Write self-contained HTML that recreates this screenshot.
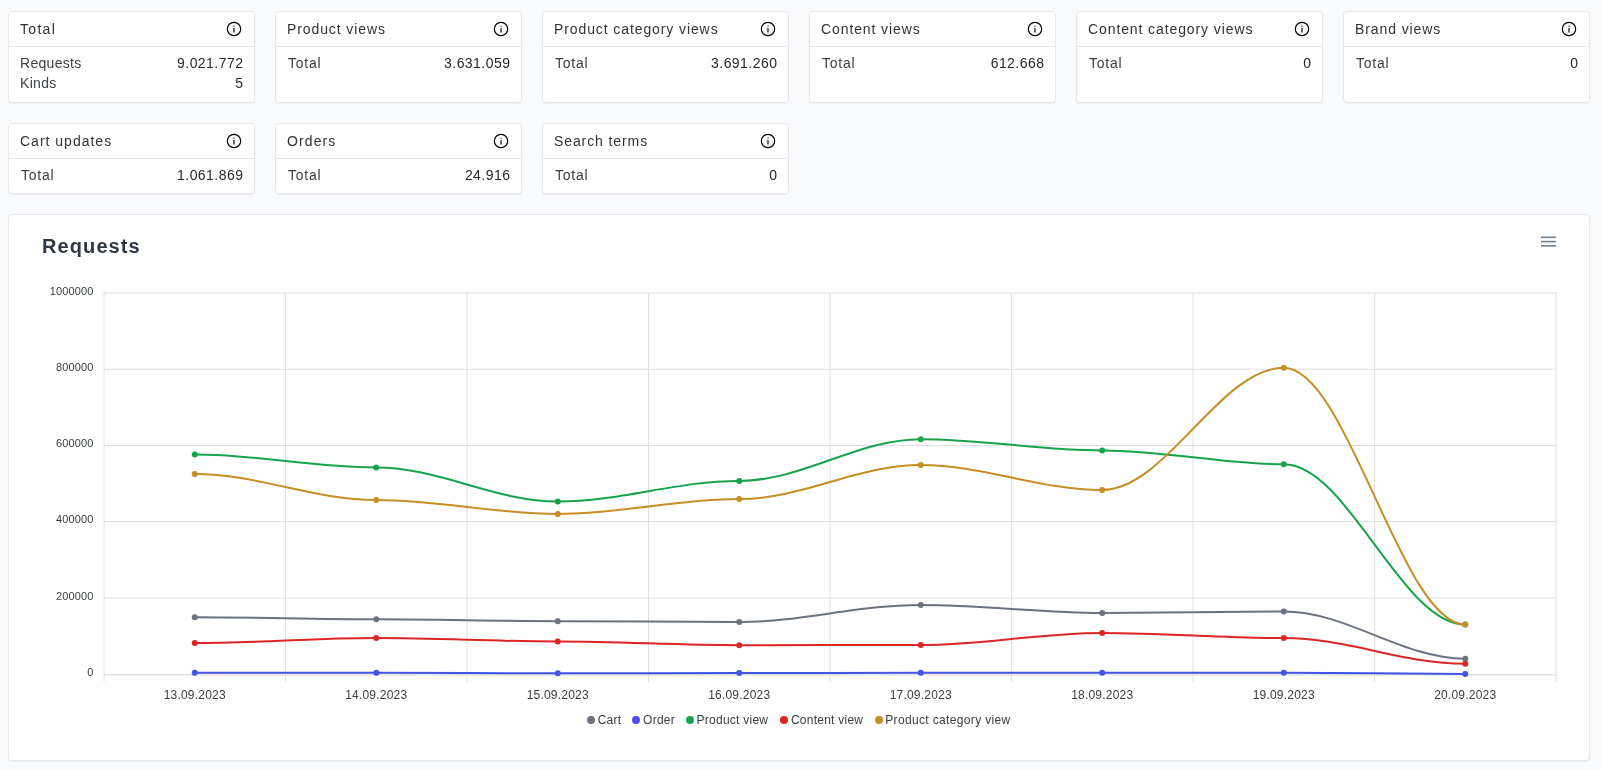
<!DOCTYPE html>
<html><head><meta charset="utf-8"><style>
*{box-sizing:border-box}
html,body{margin:0;padding:0}
body{will-change:transform;width:1601px;height:769px;background:#f9fafb;position:relative;overflow:hidden;font-family:"Liberation Sans",sans-serif;}
.card{position:absolute;width:247px;background:#fff;border:1px solid #e5e7eb;border-radius:4px;box-shadow:0 1px 2px rgba(0,0,0,.05)}
.hd{height:35px;border-bottom:1px solid #e5e7eb;position:relative}
.ht{position:absolute;left:11px;top:7px;font-size:14px;line-height:20px;color:#333;letter-spacing:.9px}
.info{position:absolute;left:217px;top:9px}
.bd{padding-top:6px}
.row{height:20px;position:relative;font-size:14px;line-height:20px}
.lb{position:absolute;left:11px;top:0;color:#3a3f44;letter-spacing:.3px}
.vl{position:absolute;right:10.6px;top:0;color:#25292d;letter-spacing:.45px}
.tt{left:12px;letter-spacing:.75px}
.chart{position:absolute;left:8px;top:214px;width:1582px;height:547px;background:#fff;border:1px solid #e5e7eb;border-radius:4px;box-shadow:0 1px 2px rgba(0,0,0,.05)}
.title{position:absolute;left:33px;top:17px;font-size:20px;font-weight:bold;color:#2f3646;line-height:28px;letter-spacing:1.1px}
svg.plot{position:absolute;left:0;top:0}
.yl,.xl{font-family:"Liberation Sans",sans-serif;font-size:11px;fill:#373d3f}
.yl{letter-spacing:.15px}
.xl{font-size:12px;letter-spacing:.2px}
.lt{position:absolute;top:712px;font-size:12px;line-height:16px;color:#373d3f;white-space:nowrap;letter-spacing:.25px}
.mk{position:absolute;top:716px;width:8px;height:8px;border-radius:50%}
</style></head><body>
<div class="card" style="left:8px;top:11px;height:92px"><div class="hd"><span class="ht" style="letter-spacing:1.3px">Total</span><svg class="info" width="16" height="16" viewBox="0 0 24 24" fill="none" stroke="#000" stroke-width="1.75" stroke-linecap="round" stroke-linejoin="round"><circle cx="12" cy="12" r="10"/><line x1="12" y1="16.6" x2="12" y2="11.4"/><line x1="12" y1="7.8" x2="12.01" y2="7.8"/></svg></div><div class="bd"><div class="row"><span class="lb">Requests</span><span class="vl">9.021.772</span></div><div class="row"><span class="lb">Kinds</span><span class="vl">5</span></div></div></div>
<div class="card" style="left:275px;top:11px;height:92px"><div class="hd"><span class="ht">Product views</span><svg class="info" width="16" height="16" viewBox="0 0 24 24" fill="none" stroke="#000" stroke-width="1.75" stroke-linecap="round" stroke-linejoin="round"><circle cx="12" cy="12" r="10"/><line x1="12" y1="16.6" x2="12" y2="11.4"/><line x1="12" y1="7.8" x2="12.01" y2="7.8"/></svg></div><div class="bd"><div class="row"><span class="lb tt">Total</span><span class="vl">3.631.059</span></div></div></div>
<div class="card" style="left:542px;top:11px;height:92px"><div class="hd"><span class="ht">Product category views</span><svg class="info" width="16" height="16" viewBox="0 0 24 24" fill="none" stroke="#000" stroke-width="1.75" stroke-linecap="round" stroke-linejoin="round"><circle cx="12" cy="12" r="10"/><line x1="12" y1="16.6" x2="12" y2="11.4"/><line x1="12" y1="7.8" x2="12.01" y2="7.8"/></svg></div><div class="bd"><div class="row"><span class="lb tt">Total</span><span class="vl">3.691.260</span></div></div></div>
<div class="card" style="left:809px;top:11px;height:92px"><div class="hd"><span class="ht">Content views</span><svg class="info" width="16" height="16" viewBox="0 0 24 24" fill="none" stroke="#000" stroke-width="1.75" stroke-linecap="round" stroke-linejoin="round"><circle cx="12" cy="12" r="10"/><line x1="12" y1="16.6" x2="12" y2="11.4"/><line x1="12" y1="7.8" x2="12.01" y2="7.8"/></svg></div><div class="bd"><div class="row"><span class="lb tt">Total</span><span class="vl">612.668</span></div></div></div>
<div class="card" style="left:1076px;top:11px;height:92px"><div class="hd"><span class="ht">Content category views</span><svg class="info" width="16" height="16" viewBox="0 0 24 24" fill="none" stroke="#000" stroke-width="1.75" stroke-linecap="round" stroke-linejoin="round"><circle cx="12" cy="12" r="10"/><line x1="12" y1="16.6" x2="12" y2="11.4"/><line x1="12" y1="7.8" x2="12.01" y2="7.8"/></svg></div><div class="bd"><div class="row"><span class="lb tt">Total</span><span class="vl">0</span></div></div></div>
<div class="card" style="left:1343px;top:11px;height:92px"><div class="hd"><span class="ht">Brand views</span><svg class="info" width="16" height="16" viewBox="0 0 24 24" fill="none" stroke="#000" stroke-width="1.75" stroke-linecap="round" stroke-linejoin="round"><circle cx="12" cy="12" r="10"/><line x1="12" y1="16.6" x2="12" y2="11.4"/><line x1="12" y1="7.8" x2="12.01" y2="7.8"/></svg></div><div class="bd"><div class="row"><span class="lb tt">Total</span><span class="vl">0</span></div></div></div>
<div class="card" style="left:8px;top:123px;height:71px"><div class="hd"><span class="ht" style="letter-spacing:1.0px">Cart updates</span><svg class="info" width="16" height="16" viewBox="0 0 24 24" fill="none" stroke="#000" stroke-width="1.75" stroke-linecap="round" stroke-linejoin="round"><circle cx="12" cy="12" r="10"/><line x1="12" y1="16.6" x2="12" y2="11.4"/><line x1="12" y1="7.8" x2="12.01" y2="7.8"/></svg></div><div class="bd"><div class="row"><span class="lb tt">Total</span><span class="vl">1.061.869</span></div></div></div>
<div class="card" style="left:275px;top:123px;height:71px"><div class="hd"><span class="ht" style="letter-spacing:1.1px">Orders</span><svg class="info" width="16" height="16" viewBox="0 0 24 24" fill="none" stroke="#000" stroke-width="1.75" stroke-linecap="round" stroke-linejoin="round"><circle cx="12" cy="12" r="10"/><line x1="12" y1="16.6" x2="12" y2="11.4"/><line x1="12" y1="7.8" x2="12.01" y2="7.8"/></svg></div><div class="bd"><div class="row"><span class="lb tt">Total</span><span class="vl">24.916</span></div></div></div>
<div class="card" style="left:542px;top:123px;height:71px"><div class="hd"><span class="ht">Search terms</span><svg class="info" width="16" height="16" viewBox="0 0 24 24" fill="none" stroke="#000" stroke-width="1.75" stroke-linecap="round" stroke-linejoin="round"><circle cx="12" cy="12" r="10"/><line x1="12" y1="16.6" x2="12" y2="11.4"/><line x1="12" y1="7.8" x2="12.01" y2="7.8"/></svg></div><div class="bd"><div class="row"><span class="lb tt">Total</span><span class="vl">0</span></div></div></div>

<div class="chart"><div class="title">Requests</div></div>
<svg class="plot" width="1601" height="769" viewBox="0 0 1601 769">
<g id="menu" fill="#6e8192"><rect x="1541" y="236.5" width="15.2" height="1.6"/><rect x="1541" y="240.8" width="15.2" height="1.6"/><rect x="1541" y="245.1" width="15.2" height="1.6"/></g>
<line x1="104" y1="292.90" x2="1556" y2="292.90" stroke="#e0e0e0" stroke-width="1"/>
<line x1="104" y1="369.20" x2="1556" y2="369.20" stroke="#e0e0e0" stroke-width="1"/>
<line x1="104" y1="445.50" x2="1556" y2="445.50" stroke="#e0e0e0" stroke-width="1"/>
<line x1="104" y1="521.60" x2="1556" y2="521.60" stroke="#e0e0e0" stroke-width="1"/>
<line x1="104" y1="598.00" x2="1556" y2="598.00" stroke="#e0e0e0" stroke-width="1"/>
<line x1="104" y1="674.50" x2="1556" y2="674.50" stroke="#e0e0e0" stroke-width="1"/>
<line x1="104.00" y1="292.9" x2="104.00" y2="674.5" stroke="#e0e0e0" stroke-width="1"/>
<line x1="285.50" y1="292.9" x2="285.50" y2="674.5" stroke="#e0e0e0" stroke-width="1"/>
<line x1="467.00" y1="292.9" x2="467.00" y2="674.5" stroke="#e0e0e0" stroke-width="1"/>
<line x1="648.50" y1="292.9" x2="648.50" y2="674.5" stroke="#e0e0e0" stroke-width="1"/>
<line x1="830.00" y1="292.9" x2="830.00" y2="674.5" stroke="#e0e0e0" stroke-width="1"/>
<line x1="1011.50" y1="292.9" x2="1011.50" y2="674.5" stroke="#e0e0e0" stroke-width="1"/>
<line x1="1193.00" y1="292.9" x2="1193.00" y2="674.5" stroke="#e0e0e0" stroke-width="1"/>
<line x1="1374.50" y1="292.9" x2="1374.50" y2="674.5" stroke="#e0e0e0" stroke-width="1"/>
<line x1="1556.00" y1="292.9" x2="1556.00" y2="674.5" stroke="#e0e0e0" stroke-width="1"/>
<line x1="104" y1="675" x2="1556" y2="675" stroke="#e0e0e0" stroke-width="1"/>
<line x1="104.00" y1="674.5" x2="104.00" y2="681.7" stroke="#e0e0e0" stroke-width="1"/>
<line x1="285.50" y1="674.5" x2="285.50" y2="681.7" stroke="#e0e0e0" stroke-width="1"/>
<line x1="467.00" y1="674.5" x2="467.00" y2="681.7" stroke="#e0e0e0" stroke-width="1"/>
<line x1="648.50" y1="674.5" x2="648.50" y2="681.7" stroke="#e0e0e0" stroke-width="1"/>
<line x1="830.00" y1="674.5" x2="830.00" y2="681.7" stroke="#e0e0e0" stroke-width="1"/>
<line x1="1011.50" y1="674.5" x2="1011.50" y2="681.7" stroke="#e0e0e0" stroke-width="1"/>
<line x1="1193.00" y1="674.5" x2="1193.00" y2="681.7" stroke="#e0e0e0" stroke-width="1"/>
<line x1="1374.50" y1="674.5" x2="1374.50" y2="681.7" stroke="#e0e0e0" stroke-width="1"/>
<line x1="1556.00" y1="674.5" x2="1556.00" y2="681.7" stroke="#e0e0e0" stroke-width="1"/>
<text x="93.5" y="294.7" text-anchor="end" class="yl">1000000</text>
<text x="93.5" y="371.0" text-anchor="end" class="yl">800000</text>
<text x="93.5" y="447.3" text-anchor="end" class="yl">600000</text>
<text x="93.5" y="523.4" text-anchor="end" class="yl">400000</text>
<text x="93.5" y="599.8" text-anchor="end" class="yl">200000</text>
<text x="93.5" y="676.3" text-anchor="end" class="yl">0</text>
<text x="194.75" y="699" text-anchor="middle" class="xl">13.09.2023</text>
<text x="376.25" y="699" text-anchor="middle" class="xl">14.09.2023</text>
<text x="557.75" y="699" text-anchor="middle" class="xl">15.09.2023</text>
<text x="739.25" y="699" text-anchor="middle" class="xl">16.09.2023</text>
<text x="920.75" y="699" text-anchor="middle" class="xl">17.09.2023</text>
<text x="1102.25" y="699" text-anchor="middle" class="xl">18.09.2023</text>
<text x="1283.75" y="699" text-anchor="middle" class="xl">19.09.2023</text>
<text x="1465.25" y="699" text-anchor="middle" class="xl">20.09.2023</text>
<path d="M194.75 617.20 C258.27 617.20 312.73 619.30 376.25 619.30 C439.77 619.30 494.23 621.20 557.75 621.20 C621.27 621.20 675.73 622.00 739.25 622.00 C802.77 622.00 857.23 604.90 920.75 604.90 C984.27 604.90 1038.72 612.90 1102.25 612.90 C1165.78 612.90 1220.22 611.50 1283.75 611.50 C1347.28 611.50 1401.72 658.70 1465.25 658.70" fill="none" stroke="#6b7280" stroke-width="2" stroke-linecap="butt"/>
<circle cx="194.75" cy="617.20" r="3" fill="#6b7280"/>
<circle cx="376.25" cy="619.30" r="3" fill="#6b7280"/>
<circle cx="557.75" cy="621.20" r="3" fill="#6b7280"/>
<circle cx="739.25" cy="622.00" r="3" fill="#6b7280"/>
<circle cx="920.75" cy="604.90" r="3" fill="#6b7280"/>
<circle cx="1102.25" cy="612.90" r="3" fill="#6b7280"/>
<circle cx="1283.75" cy="611.50" r="3" fill="#6b7280"/>
<circle cx="1465.25" cy="658.70" r="3" fill="#6b7280"/>
<path d="M194.75 672.70 C258.27 672.70 312.73 672.70 376.25 672.70 C439.77 672.70 494.23 673.30 557.75 673.30 C621.27 673.30 675.73 673.10 739.25 673.10 C802.77 673.10 857.23 672.70 920.75 672.70 C984.27 672.70 1038.72 672.70 1102.25 672.70 C1165.78 672.70 1220.22 672.80 1283.75 672.80 C1347.28 672.80 1401.72 673.90 1465.25 673.90" fill="none" stroke="#4154e4" stroke-width="2" stroke-linecap="butt"/>
<circle cx="194.75" cy="672.70" r="3" fill="#4154e4"/>
<circle cx="376.25" cy="672.70" r="3" fill="#4154e4"/>
<circle cx="557.75" cy="673.30" r="3" fill="#4154e4"/>
<circle cx="739.25" cy="673.10" r="3" fill="#4154e4"/>
<circle cx="920.75" cy="672.70" r="3" fill="#4154e4"/>
<circle cx="1102.25" cy="672.70" r="3" fill="#4154e4"/>
<circle cx="1283.75" cy="672.80" r="3" fill="#4154e4"/>
<circle cx="1465.25" cy="673.90" r="3" fill="#4154e4"/>
<path d="M194.75 454.60 C258.27 454.60 312.73 467.40 376.25 467.40 C439.77 467.40 494.23 501.50 557.75 501.50 C621.27 501.50 675.73 480.90 739.25 480.90 C802.77 480.90 857.23 439.20 920.75 439.20 C984.27 439.20 1038.72 450.40 1102.25 450.40 C1165.78 450.40 1220.22 464.30 1283.75 464.30 C1347.28 464.30 1401.72 624.50 1465.25 624.50" fill="none" stroke="#16a34a" stroke-width="2" stroke-linecap="butt"/>
<circle cx="194.75" cy="454.60" r="3" fill="#16a34a"/>
<circle cx="376.25" cy="467.40" r="3" fill="#16a34a"/>
<circle cx="557.75" cy="501.50" r="3" fill="#16a34a"/>
<circle cx="739.25" cy="480.90" r="3" fill="#16a34a"/>
<circle cx="920.75" cy="439.20" r="3" fill="#16a34a"/>
<circle cx="1102.25" cy="450.40" r="3" fill="#16a34a"/>
<circle cx="1283.75" cy="464.30" r="3" fill="#16a34a"/>
<circle cx="1465.25" cy="624.50" r="3" fill="#16a34a"/>
<path d="M194.75 643.00 C258.27 643.00 312.73 638.10 376.25 638.10 C439.77 638.10 494.23 641.50 557.75 641.50 C621.27 641.50 675.73 645.20 739.25 645.20 C802.77 645.20 857.23 645.00 920.75 645.00 C984.27 645.00 1038.72 632.90 1102.25 632.90 C1165.78 632.90 1220.22 638.10 1283.75 638.10 C1347.28 638.10 1401.72 663.70 1465.25 663.70" fill="none" stroke="#dc2626" stroke-width="2" stroke-linecap="butt"/>
<circle cx="194.75" cy="643.00" r="3" fill="#dc2626"/>
<circle cx="376.25" cy="638.10" r="3" fill="#dc2626"/>
<circle cx="557.75" cy="641.50" r="3" fill="#dc2626"/>
<circle cx="739.25" cy="645.20" r="3" fill="#dc2626"/>
<circle cx="920.75" cy="645.00" r="3" fill="#dc2626"/>
<circle cx="1102.25" cy="632.90" r="3" fill="#dc2626"/>
<circle cx="1283.75" cy="638.10" r="3" fill="#dc2626"/>
<circle cx="1465.25" cy="663.70" r="3" fill="#dc2626"/>
<path d="M194.75 474.00 C258.27 474.00 312.73 500.00 376.25 500.00 C439.77 500.00 494.23 513.90 557.75 513.90 C621.27 513.90 675.73 499.10 739.25 499.10 C802.77 499.10 857.23 465.00 920.75 465.00 C984.27 465.00 1038.72 490.00 1102.25 490.00 C1165.78 490.00 1220.22 367.80 1283.75 367.80 C1347.28 367.80 1401.72 624.50 1465.25 624.50" fill="none" stroke="#c68e24" stroke-width="2" stroke-linecap="butt"/>
<circle cx="194.75" cy="474.00" r="3" fill="#c68e24"/>
<circle cx="376.25" cy="500.00" r="3" fill="#c68e24"/>
<circle cx="557.75" cy="513.90" r="3" fill="#c68e24"/>
<circle cx="739.25" cy="499.10" r="3" fill="#c68e24"/>
<circle cx="920.75" cy="465.00" r="3" fill="#c68e24"/>
<circle cx="1102.25" cy="490.00" r="3" fill="#c68e24"/>
<circle cx="1283.75" cy="367.80" r="3" fill="#c68e24"/>
<circle cx="1465.25" cy="624.50" r="3" fill="#c68e24"/>
</svg>
<span class="mk" style="left:586.9px;background:#6b7280"></span><span class="lt" style="left:597.7px">Cart</span><span class="mk" style="left:631.7px;background:#4154e4"></span><span class="lt" style="left:643.1px">Order</span><span class="mk" style="left:685.8px;background:#16a34a"></span><span class="lt" style="left:696.6px">Product view</span><span class="mk" style="left:779.8px;background:#dc2626"></span><span class="lt" style="left:790.9px">Content view</span><span class="mk" style="left:874.9px;background:#c68e24"></span><span class="lt" style="left:885.2px;letter-spacing:.35px">Product category view</span>
</body></html>
